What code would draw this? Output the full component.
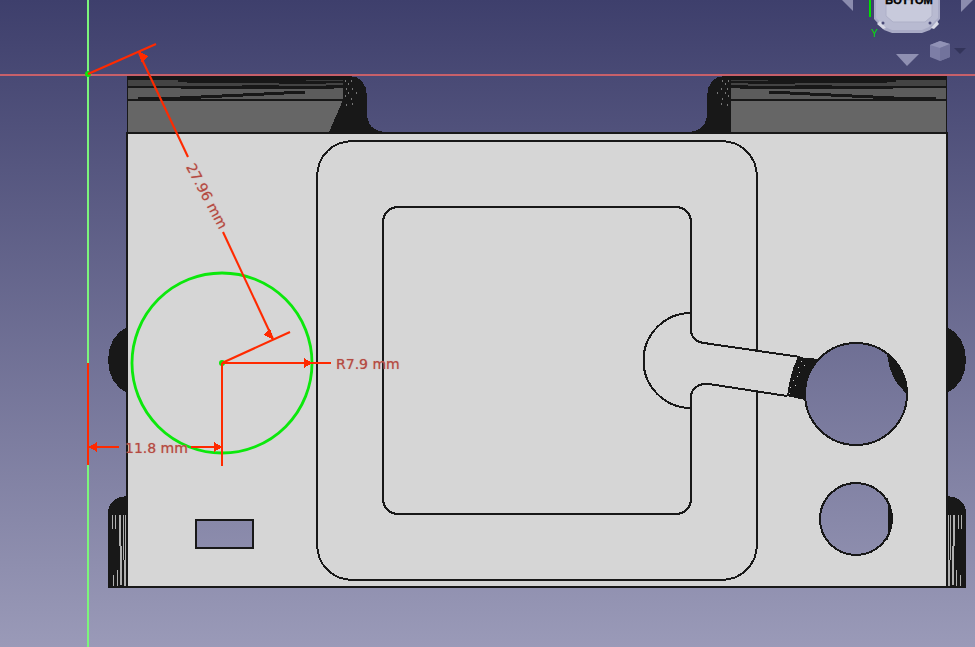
const steps = [
  [138, 97, 21],
  [159, 97, 21],
  [180, 96, 21],
  [201, 95, 21],
  [222, 94, 21],
  [243, 93, 21],
  [264, 92, 20],
  [284, 91, 21],
];

// thin grey faces above the dark band: x, y, width, height, colour
const upperFaces = [
  [128, 80, 50, 6, "#444444"],
  [178, 82, 9, 4, "#444444"],
  [187, 83, 55, 3, "#444444"],
  [242, 83, 37, 2, "#444444"],
  [279, 84, 47, 2, "#444444"],
  [326, 83, 17, 2, "#444444"],
  [306, 80, 37, 1, "#3c3c3c"],
] as const;

const speckles = [
  [345, 80], [348, 83], [351, 80], [346, 88], [352, 88], [356, 92], [345, 95], [351, 98], [346, 104], [352, 103], [348, 92],
];

const tabStreaks = [
  [112, 515, 529, 1], [115, 515, 529, 1], [119, 515, 546, 2], [120, 546, 585, 2], [123, 515, 560, 1], [124, 560, 586, 2], [125, 515, 560, 2], [117, 570, 586, 1], [113, 575, 586, 1],
];

// one end of the part seen from below, mirrored for the other side
const SideBlock = () => (
  <>
    <path d="M127 76H350C360 76 367 84 367 96V112C367 124 372 132 388 132V134H127Z" fill="#181818" />
    <rect x="128" y="101" width="215" height="31" fill="#666666" />
    <rect x="128" y="88" width="215" height="11" fill="#5c5c5c" />
    {upperFaces.map(([x, y, w, h, c]) => (
      <rect key={`${x}-${y}`} x={x} y={y} width={w} height={h} fill={c} />
    ))}
    <rect x="181" y="88" width="153" height="1" fill="#181818" />
    {steps.map(([x, y, w]) => (
      <rect key={x} x={x} y={y} width={w} height={3} fill="#181818" />
    ))}
    {speckles.map(([x, y]) => (
      <rect key={`${x}-${y}`} x={x} y={y} width={1} height={2} fill="#777777" />
    ))}
    <path d="M108 360C108 344 116 332 127 327V393C116 388 108 376 108 360Z" fill="#181818" />
    <path d="M108 588V512C108 503 116 496 127 496V588Z" fill="#181818" />
    {tabStreaks.map(([x, y1, y2, w]) => (
      <rect key={`${x}-${y1}`} x={x} y={y1} width={w} height={y2 - y1} fill="#b0b0b0" />
    ))}
  </>
);

const PartDrawing = () => (
  <svg className="absolute inset-0" width="975" height="647" viewBox="0 0 975 647" shapeRendering="crispEdges">
    <SideBlock />
    <g transform="translate(1074 0) scale(-1 1)">
      <SideBlock />
    </g>
    <path d="M329 132L343 100V132Z" fill="#181818" />

    {/* body with the holes cut out so the background shows through */}
    <path
      fillRule="evenodd"
      fill="#d6d6d6"
      stroke="#181818"
      strokeWidth="2"
      d="M127 133H947V587H127ZM196 520H253V548H196ZM856 343A51 51 0 1 0 856.01 445A51 51 0 1 0 856 343ZM856 483A36 36 0 1 0 856.01 555A36 36 0 1 0 856 483Z"
    />
    <rect x="108" y="586" width="858" height="2" fill="#181818" />

    {/* dark material seen through the holes */}
    <path d="M887 354C889 372 895 384 907 394C908 380 900 364 887 354Z" fill="#181818" />
    <path d="M887 497C889 510 889 528 887 541C892 530 893 510 887 497Z" fill="#181818" />
    <path d="M787 396C789 382 792 368 798 357L819 359C809 370 804 384 805 400Z" fill="#181818" />
    {[[801, 361], [798, 367], [804, 365], [797, 376], [793, 380], [790, 387], [795, 385], [799, 372], [789, 393]].map(([x, y]) => (
      <rect key={`${x}-${y}`} x={x} y={y} width={1} height={1} fill="#d6d6d6" />
    ))}

    {/* pocket outlines */}
    <g fill="none" stroke="#181818" strokeWidth="2">
      <path d="M757 350V178C757 156 742 141 720 141H354C332 141 317 156 317 178V543C317 565 332 580 354 580H720C742 580 757 565 757 543V392" />
      <path d="M691 313V223C691 213 685 207 675 207H399C389 207 383 213 383 223V498C383 508 389 514 399 514H675C685 514 691 508 691 498V397C691 389 698 383 709 384L787 396" />
      <path d="M691 313V330C691 337 696 342 704 343L800 357" />
      <path d="M691 313A47.5 47.5 0 0 0 691 408" />
    </g>

    {/* axes */}
    <rect x="0" y="74" width="975" height="2" fill="#c7606a" />
    <rect x="87" y="0" width="2" height="647" fill="#7cf57c" />

    {/* sketch circle */}
    <g shapeRendering="auto">
      <circle cx="222" cy="363" r="90" fill="none" stroke="#0ce80c" strokeWidth="2.8" />
      <circle cx="88" cy="74" r="3" fill="#0ce80c" />
      <circle cx="222" cy="363" r="3" fill="#0ce80c" />
    </g>

    {/* dimensions */}
    <g stroke="#ff2a00" strokeWidth="2.1" fill="none" shapeRendering="auto">
      <path d="M88 74L156 44" />
      <path d="M139 53L188 157" />
      <path d="M223 232L273 339" />
      <path d="M222 363L290 332" />
    </g>
    <g stroke="#ff2a00" strokeWidth="2" fill="none">
      <path d="M222 363H331" />
      <path d="M222 363V466" />
      <path d="M88 363V465" />
      <path d="M89 447H119" />
      <path d="M191 447H222" />
    </g>
    <g fill="#ff2a00">
      <path d="M138 51L148 56L142 63Z" />
      <path d="M274 340L264 335L270 328Z" />
      <path d="M312 363L304 358V368Z" />
      <path d="M89 447L97 442V452Z" />
      <path d="M222 447L214 442V452Z" />
    </g>
  </svg>
);

// navigation cube in the corner, only its lower part is on screen
const NaviCube = () => (
  <>
    <svg className="absolute inset-0" width="975" height="80" viewBox="0 0 975 80">
      <path d="M842 0H853V11Z" fill="#8b8cae" />
      <path d="M961 0H973L961 12Z" fill="#8b8cae" />
      <path d="M896 54H919L907 66Z" fill="#8f90b2" />
      <path d="M874 0H940V19L930 30L922 33H892L884 30L874 19Z" fill="#a9abc6" />
      <path d="M876 0H938V18L929 27L922 30H892L885 27L876 18Z" fill="#b8bad1" />
      <path d="M886 0H932V16L925 22H893L886 16Z" fill="#c8cadc" stroke="#aeb0c8" />
      <path d="M880 21L886 28L883 29L877 24Z" fill="#d8d9e6" />
      <path d="M937 21L931 28L934 29L939 24Z" fill="#d8d9e6" />
      <circle cx="883" cy="23" r="1.5" fill="#4a4b78" />
      <circle cx="930" cy="23" r="1.5" fill="#4a4b78" />
      <rect x="869" y="0" width="2" height="17" fill="#00e000" />
      <path d="M940 41L950 44V57L940 61L930 57V45Z" fill="#7d7ea6" />
      <path d="M930 45L940 48L950 44L940 41Z" fill="#9192b6" />
      <path d="M940 48V61L950 57V44Z" fill="#72739c" />
      <path d="M954 48H966L960 54Z" fill="#33345a" />
    </svg>
    <span className="absolute left-[885px] top-[-6px] w-[48px] text-center font-['Liberation_Sans',sans-serif] text-[11px] font-bold leading-[12px] text-black [-webkit-text-stroke:0.4px_black]">
      BOTTOM
    </span>
    <span className="absolute left-[871px] top-[29px] font-['Liberation_Sans',sans-serif] text-[10px] leading-[10px] text-[#00e000]">
      Y
    </span>
  </>
);

const dimText = "absolute font-['DejaVu_Sans',sans-serif] text-[14px] leading-[18px] whitespace-nowrap text-[#b34a42] [text-shadow:0_0_1px_#d08078]";

export default function App() {
  return (
    <div className="relative h-[647px] w-[975px] overflow-hidden bg-[linear-gradient(#3e3f6c,#9a9ab8)]">
      <PartDrawing />
      <NaviCube />
      <span className={`${dimText} left-[336px] top-[355px]`}>R7.9 mm</span>
      <span className={`${dimText} left-[125px] top-[439px]`}>11.8 mm</span>
      <span className={`${dimText} left-[171px] top-[187px] rotate-[62deg]`}>27.96 mm</span>
    </div>
  );
}
